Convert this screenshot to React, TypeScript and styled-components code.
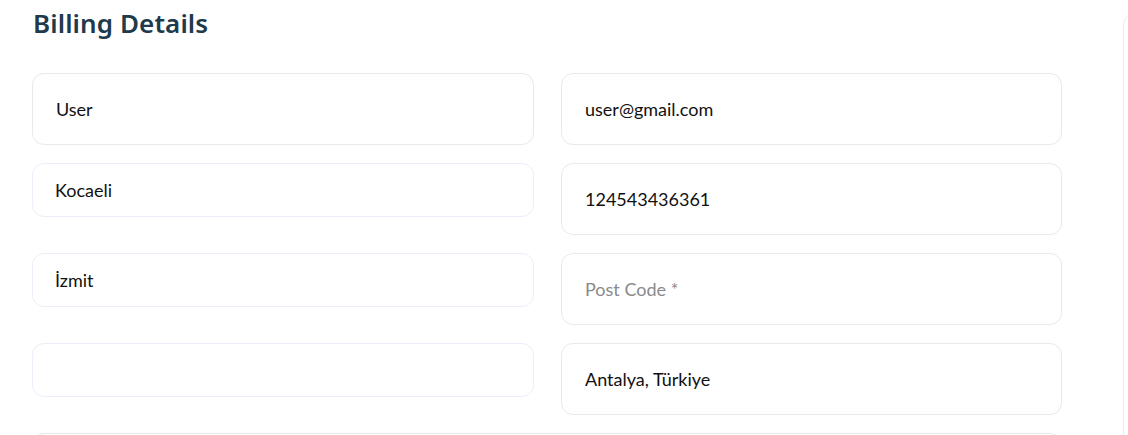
import styled, { createGlobalStyle } from 'styled-components';

const GlobalStyle = createGlobalStyle`
  * { box-sizing: border-box; }
  body {
    margin: 0;
    background: #fff;
    font-family: Lato, 'Open Sans', sans-serif;
  }
`;

const Page = styled.div`
  display: flex;
  align-items: flex-start;
  gap: 61px;
  padding-left: 32px;
  overflow: hidden;
  height: 435px;
`;

const Main = styled.div`
  width: 1030px;
  flex-shrink: 0;
`;

const Title = styled.h2`
  margin: 6px 0 0 1px;
  height: 67px;
  font-family: 'Noto Sans', sans-serif;
  font-weight: 600;
  font-size: 26px;
  line-height: 34px;
  letter-spacing: 0.1px;
  color: #1e3a4c;
`;

const Grid = styled.div`
  display: grid;
  grid-template-columns: 502px 501px;
  column-gap: 27px;
  row-gap: 18px;
  align-items: start;
`;

const Field = styled.input<{ $short?: boolean; $wide?: boolean }>`
  display: block;
  width: 100%;
  height: ${(p) => (p.$short ? '54px' : '72px')};
  grid-column: ${(p) => (p.$wide ? '1 / -1' : 'auto')};
  padding: 0 ${(p) => (p.$short ? '22px' : '23px')};
  border: 1px solid ${(p) => (p.$short ? '#ececfa' : '#e9e9ec')};
  border-radius: 12px;
  background: #fff;
  font-family: Lato, sans-serif;
  font-size: 18px;
  color: #111;
  outline: none;

  &::placeholder {
    color: #8a8a8a;
  }
`;

const Side = styled.aside`
  width: 300px;
  height: 480px;
  margin-top: 10px;
  border: 1px solid #ececec;
  border-radius: 16px;
  flex-shrink: 0;
`;

export default function App() {
  return (
    <>
      <GlobalStyle />
      <Page>
        <Main>
          <Title>Billing Details</Title>
          <Grid>
            <Field defaultValue="User" />
            <Field defaultValue="user@gmail.com" />
            <Field $short defaultValue="Kocaeli" />
            <Field defaultValue="124543436361" />
            <Field $short defaultValue="İzmit" />
            <Field placeholder="Post Code *" />
            <Field $short defaultValue="" />
            <Field defaultValue="Antalya, Türkiye" />
            <Field $wide />
          </Grid>
        </Main>
        <Side />
      </Page>
    </>
  );
}
